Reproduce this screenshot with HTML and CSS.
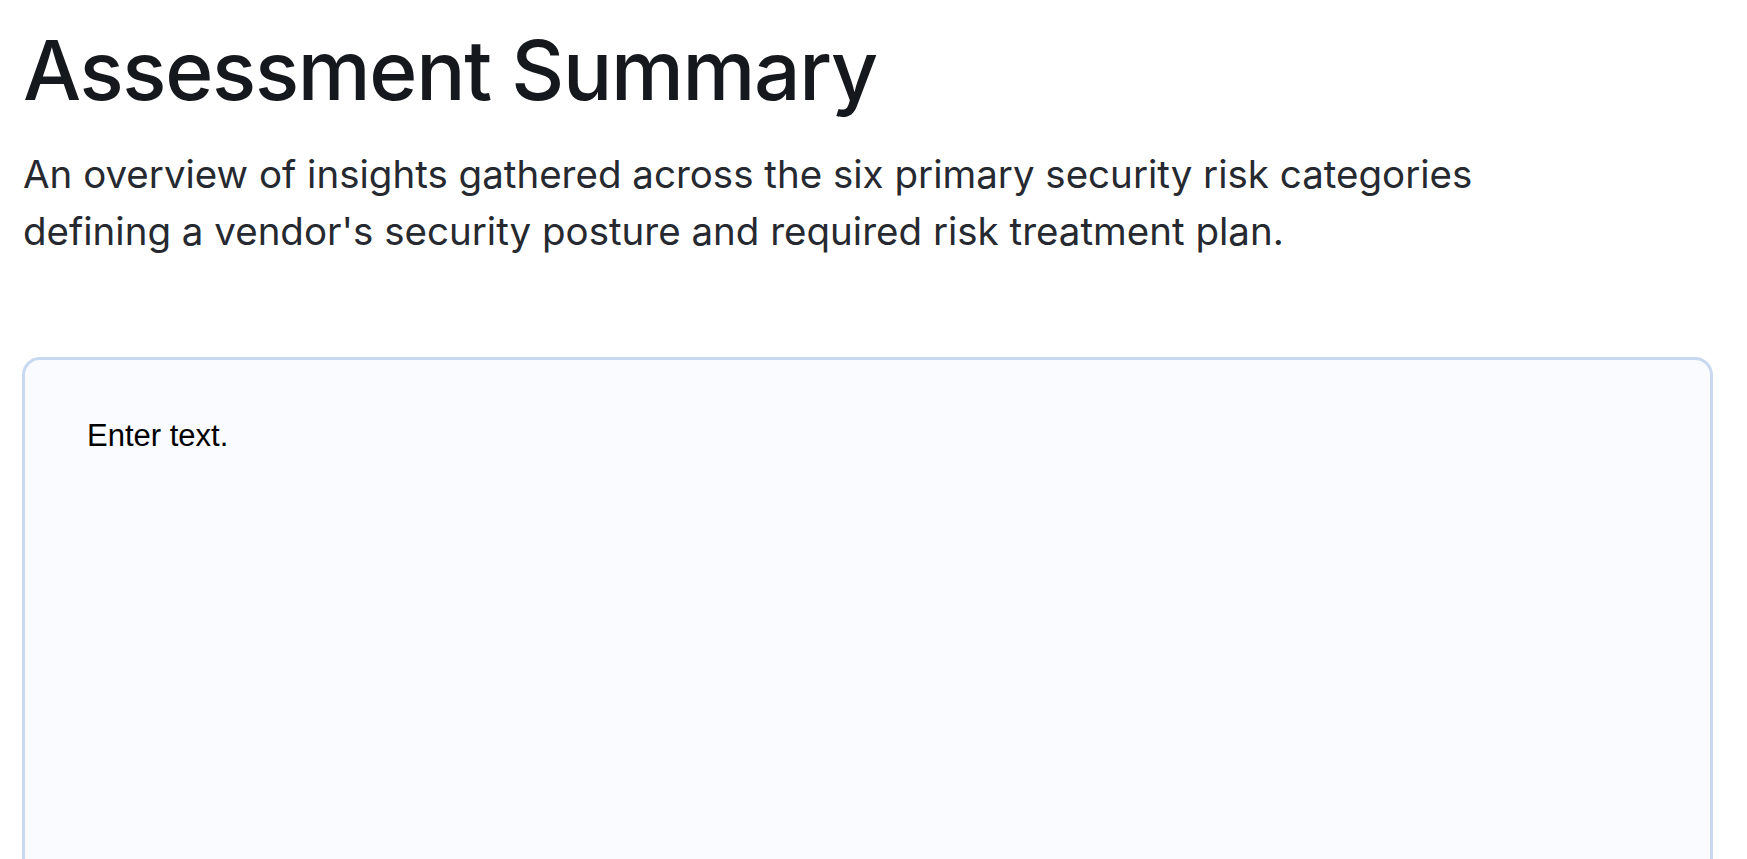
FILE: index.html
```html
<!DOCTYPE html>
<html lang="en">
<head>
<meta charset="utf-8">
<title>Assessment Summary</title>
<link rel="stylesheet" href="styles.css">
</head>
<body>
<main class="page">
  <header class="intro">
    <h1 class="title">Assessment Summary</h1>
    <p class="lead">An overview of insights gathered across the six primary security risk categories defining a vendor's security posture and required risk treatment plan.</p>
  </header>
  <section class="editor">
    <p class="placeholder">Enter text.</p>
  </section>
</main>
</body>
</html>
```

FILE: styles.css
```css
html, body {
  margin: 0;
  padding: 0;
  background: #ffffff;
}

.page {
  padding: 26px 34px 0 22px;
  font-family: Inter, "Noto Sans", sans-serif;
}

.intro {
  padding-left: 1px;
}

.title {
  margin: 0;
  font-size: 82px;
  line-height: 90px;
  font-weight: 500;
  letter-spacing: -0.016em;
  color: #15181c;
}

.lead {
  margin: 30px 0 0 0;
  max-width: 1500px;
  font-size: 38.5px;
  line-height: 57px;
  font-weight: 400;
  color: #262a30;
}

.editor {
  margin-top: 97px;
  min-height: 640px;
  border: 3px solid #c9d8f1;
  border-radius: 18px;
  background: #f9fbfe;
  padding: 58px 62px;
}

.placeholder {
  margin: 0;
  font-family: "Liberation Sans", Arial, sans-serif;
  font-size: 31px;
  line-height: 35px;
  color: #000000;
}
```
